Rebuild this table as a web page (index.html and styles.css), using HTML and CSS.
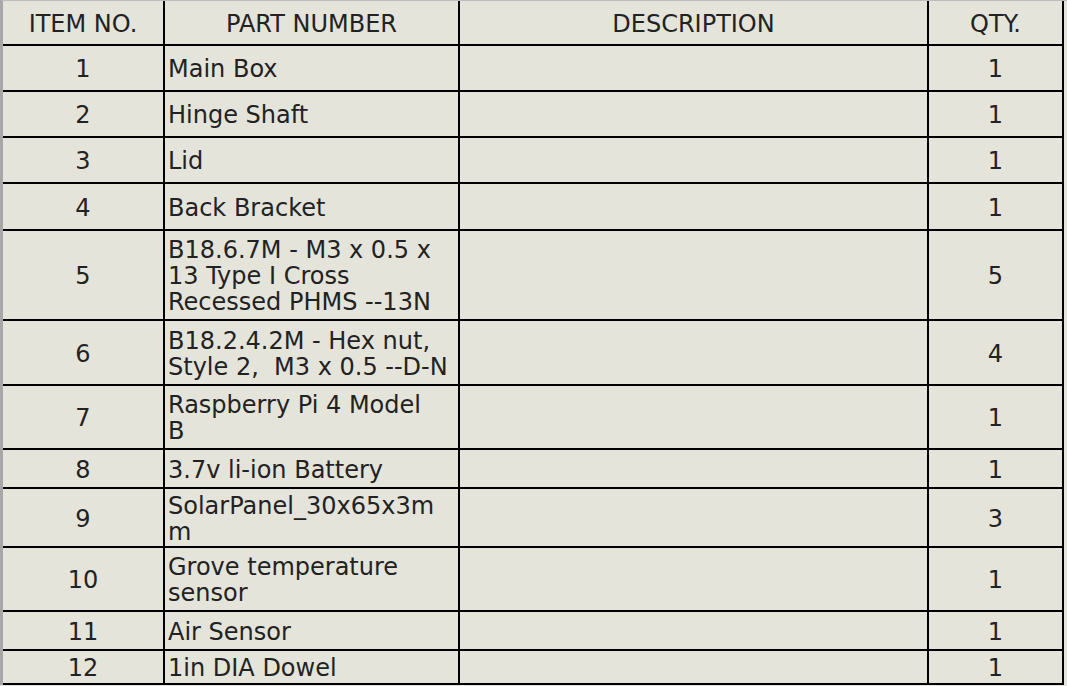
FILE: index.html
```html
<!DOCTYPE html>
<html lang="en">
<head>
<meta charset="utf-8">
<title>Bill of Materials</title>
<link rel="stylesheet" href="styles.css">
</head>
<body>
<div class="frame">
  <div class="bom">
    <div class="cell head">ITEM NO.</div>
    <div class="cell head">PART NUMBER</div>
    <div class="cell head">DESCRIPTION</div>
    <div class="cell head">QTY.</div>

    <div class="cell num">1</div>
    <div class="cell part">Main Box</div>
    <div class="cell desc"></div>
    <div class="cell num">1</div>

    <div class="cell num">2</div>
    <div class="cell part">Hinge Shaft</div>
    <div class="cell desc"></div>
    <div class="cell num">1</div>

    <div class="cell num">3</div>
    <div class="cell part">Lid</div>
    <div class="cell desc"></div>
    <div class="cell num">1</div>

    <div class="cell num">4</div>
    <div class="cell part">Back Bracket</div>
    <div class="cell desc"></div>
    <div class="cell num">1</div>

    <div class="cell num">5</div>
    <div class="cell part">B18.6.7M - M3 x 0.5 x<br>13 Type I Cross<br>Recessed PHMS --13N</div>
    <div class="cell desc"></div>
    <div class="cell num">5</div>

    <div class="cell num">6</div>
    <div class="cell part">B18.2.4.2M - Hex nut,<br>Style 2,&nbsp; M3 x 0.5 --D-N</div>
    <div class="cell desc"></div>
    <div class="cell num">4</div>

    <div class="cell num">7</div>
    <div class="cell part">Raspberry Pi 4 Model<br>B</div>
    <div class="cell desc"></div>
    <div class="cell num">1</div>

    <div class="cell num">8</div>
    <div class="cell part">3.7v li-ion Battery</div>
    <div class="cell desc"></div>
    <div class="cell num">1</div>

    <div class="cell num">9</div>
    <div class="cell part">SolarPanel_30x65x3m<br>m</div>
    <div class="cell desc"></div>
    <div class="cell num">3</div>

    <div class="cell num">10</div>
    <div class="cell part">Grove temperature<br>sensor</div>
    <div class="cell desc"></div>
    <div class="cell num">1</div>

    <div class="cell num">11</div>
    <div class="cell part">Air Sensor</div>
    <div class="cell desc"></div>
    <div class="cell num">1</div>

    <div class="cell num">12</div>
    <div class="cell part">1in DIA Dowel</div>
    <div class="cell desc"></div>
    <div class="cell num">1</div>
  </div>
</div>
</body>
</html>
```

FILE: styles.css
```css
html, body {
  margin: 0;
  padding: 0;
  background: #e4e4db;
  overflow: hidden;
}

body {
  font-family: "DejaVu Sans", "Liberation Sans", sans-serif;
  font-size: 24px;
  color: #222222;
}

.frame {
  border-top: 1px solid #bdbdbd;
  border-left: 3px solid #a8a8a8;
  height: 685px;
  box-sizing: border-box;
}

.bom {
  display: grid;
  width: max-content;
  grid-template-columns: 160px 293px 467px 133px;
  grid-template-rows: 43px 44px 44px 44px 45px 88px 63px 62px 37px 57px 62px 37px 32px;
  gap: 2px;
  padding: 0 2px 2px 0;
  background: #000;
}

.cell {
  background: #e4e4db;
  display: flex;
  align-items: center;
  line-height: 26px;
  white-space: nowrap;
  padding-top: 2px;
  box-sizing: border-box;
}

.head,
.num {
  justify-content: center;
}

.part {
  padding-left: 3px;
}
```
